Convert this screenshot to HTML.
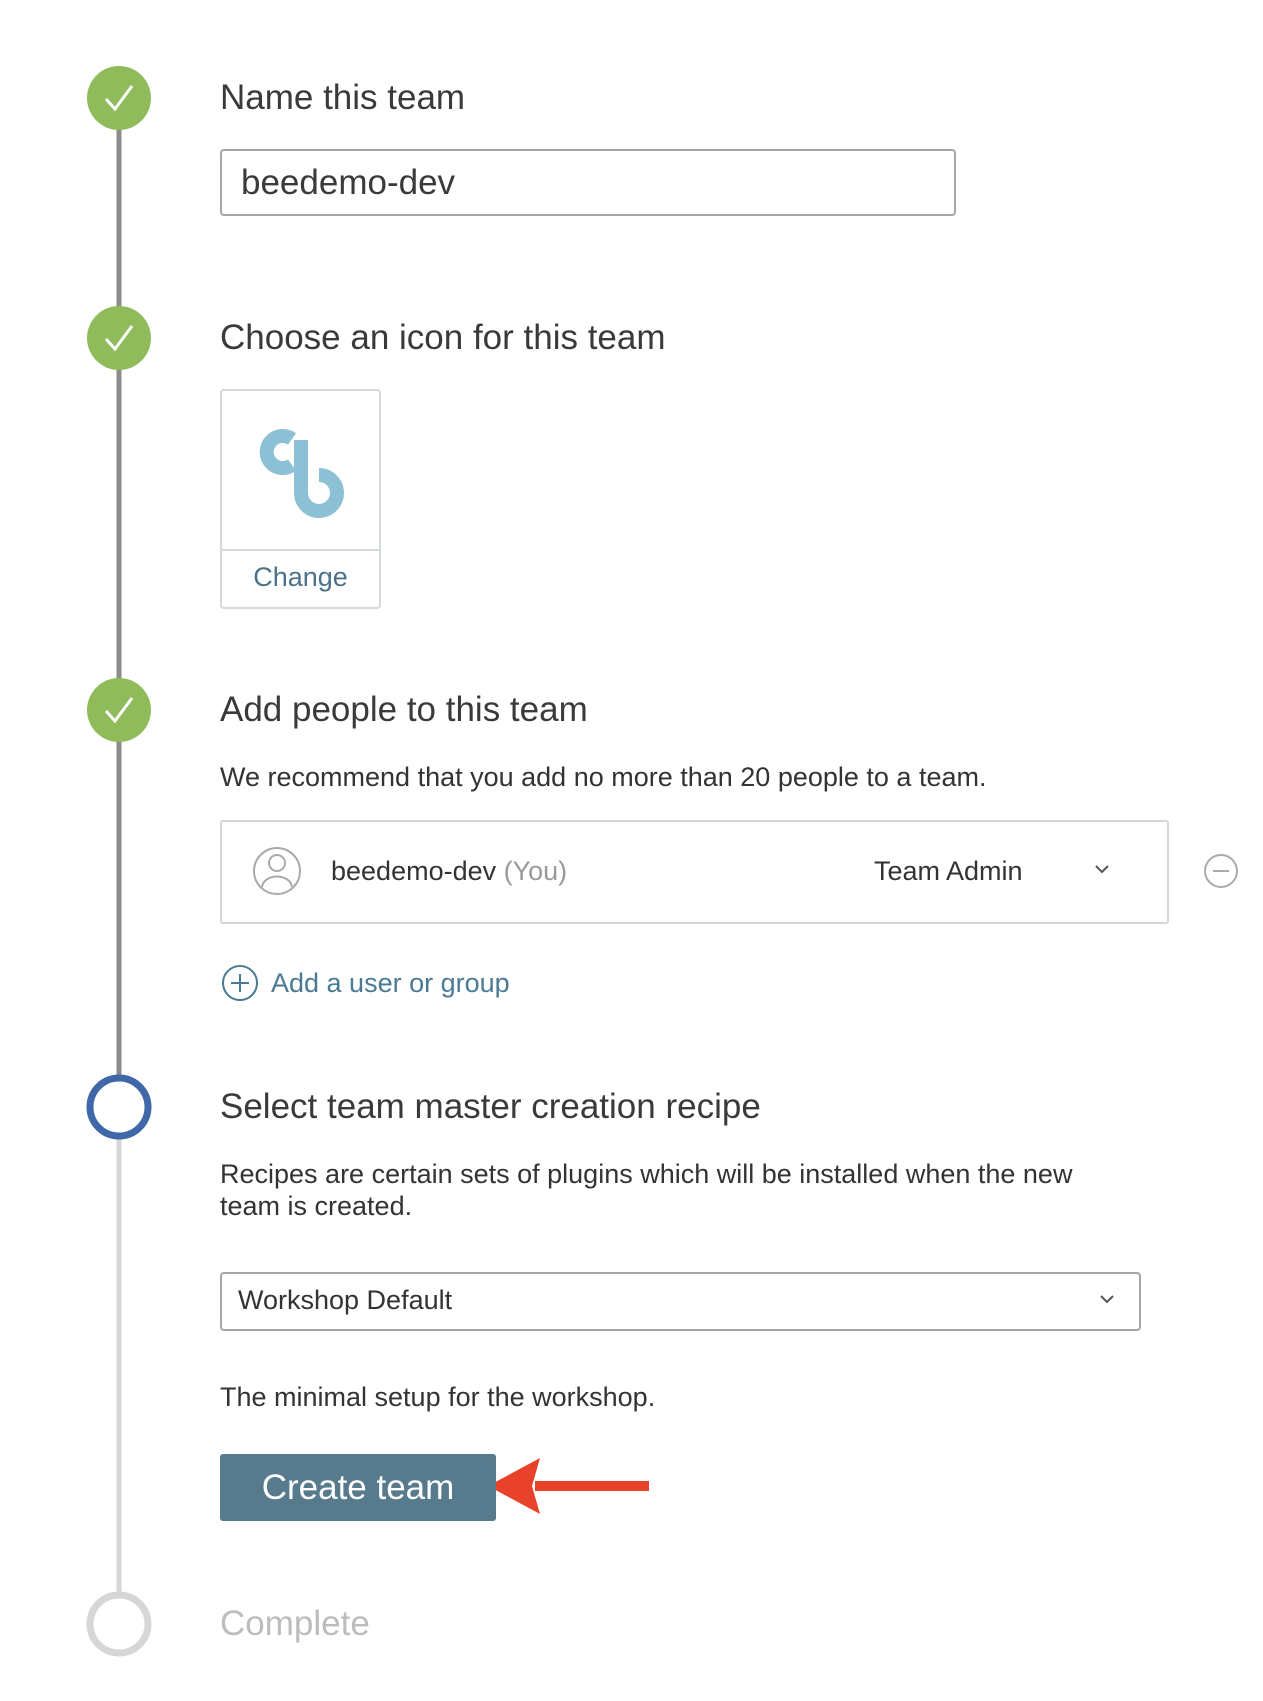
<!DOCTYPE html>
<html><head><meta charset="utf-8"><style>
body{margin:0;width:1263px;height:1701px;background:#fff;font-family:"Liberation Sans",sans-serif;color:#333;position:relative;overflow:hidden}
.a{position:absolute;white-space:nowrap}
.h{font-size:35px;color:#3a3a3a;line-height:40px}
.t{font-size:27px;color:#333;line-height:32px}
</style></head><body>
<svg class="a" style="left:0;top:0" width="1263" height="1701">
<line x1="119" y1="98" x2="119" y2="1107" stroke="#8c8c8c" stroke-width="5"/>
<line x1="119" y1="1107" x2="119" y2="1624" stroke="#d6d6d6" stroke-width="5"/>
<g fill="#8fbb5a"><circle cx="119" cy="98" r="32"/><circle cx="119" cy="338" r="32"/><circle cx="119" cy="710" r="32"/></g>
<g fill="none" stroke="#fff" stroke-width="3"><path d="M106 99 L115 109 L132 86"/><path d="M106 339 L115 349 L132 326"/><path d="M106 711 L115 721 L132 698"/></g>
<circle cx="119" cy="1107" r="29" fill="#fff" stroke="#4068a8" stroke-width="7"/>
<circle cx="119" cy="1624" r="29" fill="#fff" stroke="#d6d6d6" stroke-width="7"/>
<g fill="none" stroke="#8cc1d5" stroke-width="14">
<path d="M292 439 A16 16 0 1 0 292 465"/>
<path d="M301 440 V493 A18 18 0 1 0 319 475"/>
</g>
<g fill="none" stroke="#aaa" stroke-width="2"><circle cx="277" cy="871" r="23"/><circle cx="277" cy="863" r="8"/><path d="M262 887 C264 873 290 873 292 887"/>
<circle cx="1221" cy="871" r="16"/><line x1="1213" y1="871" x2="1229" y2="871"/></g>
<g fill="none" stroke="#555" stroke-width="2"><path d="M1096 866 L1102 872 L1108 866"/><path d="M1101 1296 L1107 1302 L1113 1296"/></g>
<g fill="none" stroke="#4a7a94" stroke-width="2"><circle cx="240" cy="983" r="17"/><path d="M240 974 V992 M231 983 H249"/></g>
<path d="M649 1486 L535 1486" stroke="#e8432a" stroke-width="10"/>
<path d="M488 1486 L540 1458 L532 1486 L540 1514 Z" fill="#e8432a"/>
</svg>
<div class="a h" style="left:220px;top:78px">Name this team</div>
<div class="a" style="left:220px;top:149px;width:732px;height:63px;border:2px solid #a5a5a5;border-radius:4px"></div>
<div class="a h" style="left:241px;top:163px">beedemo-dev</div>
<div class="a h" style="left:220px;top:318px">Choose an icon for this team</div>
<div class="a" style="left:220px;top:389px;width:157px;height:216px;border:2px solid #d4d9dd;border-radius:4px"></div>
<div class="a" style="left:222px;top:549px;width:157px;border-top:2px solid #d4d9dd"></div>
<div class="a" style="left:220px;top:562px;width:161px;text-align:center;font-size:27px;color:#4d7189">Change</div>
<div class="a h" style="left:220px;top:690px">Add people to this team</div>
<div class="a t" style="left:220px;top:761px">We recommend that you add no more than 20 people to a team.</div>
<div class="a" style="left:220px;top:820px;width:945px;height:100px;border:2px solid #d6d6d6;border-radius:3px"></div>
<div class="a t" style="left:331px;top:855px">beedemo-dev <span style="color:#999">(You)</span></div>
<div class="a t" style="left:874px;top:855px">Team Admin</div>
<div class="a t" style="left:271px;top:967px;color:#4a7a94">Add a user or group</div>
<div class="a h" style="left:220px;top:1087px">Select team master creation recipe</div>
<div class="a t" style="left:220px;top:1158px">Recipes are certain sets of plugins which will be installed when the new<br>team is created.</div>
<div class="a" style="left:220px;top:1272px;width:917px;height:55px;border:2px solid #a5a5a5;border-radius:4px"></div>
<div class="a t" style="left:238px;top:1284px">Workshop Default</div>
<div class="a t" style="left:220px;top:1381px">The minimal setup for the workshop.</div>
<div class="a" style="left:220px;top:1454px;width:276px;height:67px;background:#577a8c;border-radius:3px;color:#fff;font-size:35px;line-height:67px;text-align:center">Create team</div>
<div class="a h" style="left:220px;top:1604px;color:#bdbdbd">Complete</div>
</body></html>
